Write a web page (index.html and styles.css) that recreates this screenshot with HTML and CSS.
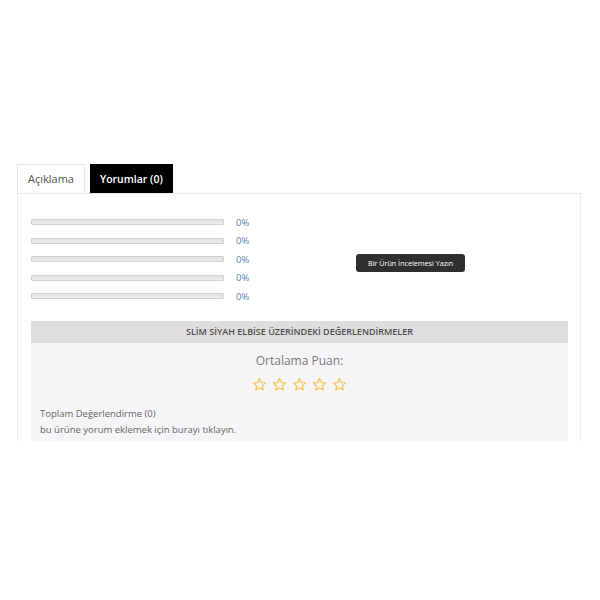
FILE: index.html
```html
<!DOCTYPE html>
<html lang="tr">
<head>
<meta charset="utf-8">
<link rel="stylesheet" href="styles.css">
</head>
<body>
<div class="page">
  <div class="tabs">
    <div class="tab">Açıklama</div>
    <div class="tab active">Yorumlar (0)</div>
  </div>
  <div class="panel">
    <div class="summary">
      <div class="bars">
        <div class="row"><div class="bar"></div><span class="pct">0%</span></div>
        <div class="row"><div class="bar"></div><span class="pct">0%</span></div>
        <div class="row"><div class="bar"></div><span class="pct">0%</span></div>
        <div class="row"><div class="bar"></div><span class="pct">0%</span></div>
        <div class="row"><div class="bar"></div><span class="pct">0%</span></div>
      </div>
      <div class="write">
        <span class="btn">Bir Ürün İncelemesi Yazın</span>
      </div>
    </div>
    <div class="reviews">
      <div class="rev-head">SLİM SİYAH ELBİSE ÜZERİNDEKİ DEĞERLENDİRMELER</div>
      <div class="rev-body">
        <div class="avg">Ortalama Puan:</div>
        <div class="stars">
          <svg viewBox="0 0 24 24"><path d="M12 2.5l2.9 6.2 6.7.8-5 4.6 1.3 6.6L12 17.4l-5.9 3.3 1.3-6.6-5-4.6 6.7-.8z"/></svg>
          <svg viewBox="0 0 24 24"><path d="M12 2.5l2.9 6.2 6.7.8-5 4.6 1.3 6.6L12 17.4l-5.9 3.3 1.3-6.6-5-4.6 6.7-.8z"/></svg>
          <svg viewBox="0 0 24 24"><path d="M12 2.5l2.9 6.2 6.7.8-5 4.6 1.3 6.6L12 17.4l-5.9 3.3 1.3-6.6-5-4.6 6.7-.8z"/></svg>
          <svg viewBox="0 0 24 24"><path d="M12 2.5l2.9 6.2 6.7.8-5 4.6 1.3 6.6L12 17.4l-5.9 3.3 1.3-6.6-5-4.6 6.7-.8z"/></svg>
          <svg viewBox="0 0 24 24"><path d="M12 2.5l2.9 6.2 6.7.8-5 4.6 1.3 6.6L12 17.4l-5.9 3.3 1.3-6.6-5-4.6 6.7-.8z"/></svg>
        </div>
        <div class="total">Toplam Değerlendirme (0)</div>
        <div class="add">bu ürüne yorum eklemek için burayı tıklayın.</div>
      </div>
    </div>
  </div>
</div>
</body>
</html>
```
FILE: styles.css
```css
html, body {
  margin: 0;
  padding: 0;
  background: #fff;
}
body {
  font-family: "Open Sans", "Liberation Sans", sans-serif;
  color: #555;
}
.page {
  padding: 164px 19px 0 17px;
}
.tabs {
  display: flex;
  gap: 5px;
  align-items: flex-end;
}
.tab {
  box-sizing: border-box;
  height: 29px;
  padding: 0 10px;
  font-size: 11px;
  line-height: 28px;
  color: #555;
  border: 1px solid #e6e6e6;
  border-bottom: none;
  background: #fff;
}
.tab.active {
  background: #000;
  border-color: #000;
  color: #fff;
  font-weight: 600;
  font-size: 10.5px;
  padding: 0 9px;
}
.panel {
  border: 1px solid #ececec;
  border-bottom: none;
  height: 247px;
  overflow: hidden;
  padding: 0 12px 0 13px;
}
.summary {
  display: flex;
  padding-top: 22px;
  height: 105px;
}
.bars {
  display: flex;
  flex-direction: column;
  gap: 6.5px;
  width: 325px;
}
.row {
  display: flex;
  align-items: center;
  height: 12px;
}
.bar {
  box-sizing: border-box;
  width: 193px;
  height: 6px;
  border: 1px solid #d2d2d2;
  background: linear-gradient(#e2e2e2, #ececec);
  border-radius: 1px;
}
.pct {
  margin-left: 12px;
  font-size: 9.5px;
  color: #5b84b8;
}
.write {
  flex: 1;
  padding-top: 33px;
}
.btn {
  display: inline-block;
  background: #2f2f2f;
  color: #fff;
  font-size: 7.2px;
  line-height: 18px;
  padding: 0 12px;
  border-radius: 3px;
}
.rev-head {
  height: 22px;
  line-height: 22px;
  background: #dedede;
  text-align: center;
  font-size: 9px;
  font-weight: 600;
  color: #4f4f4f;
}
.rev-body {
  background: #f5f5f7;
  padding: 9px 9px 20px;
  height: 120px;
}
.avg {
  text-align: center;
  font-size: 12px;
  color: #7a7a7a;
  line-height: 18px;
}
.stars {
  display: flex;
  justify-content: center;
  gap: 5px;
  margin-top: 7px;
}
.stars svg {
  width: 15px;
  height: 15px;
  fill: none;
  stroke: #f0c23c;
  stroke-width: 1.8;
  stroke-linejoin: round;
}
.total, .add {
  font-size: 9.5px;
  color: #666;
  line-height: 15.5px;
}
.total {
  margin-top: 14px;
}
```
